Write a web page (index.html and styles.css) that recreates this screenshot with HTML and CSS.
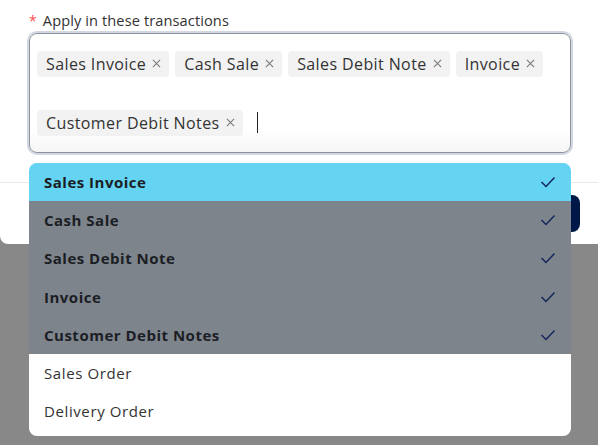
FILE: index.html
```html
<!DOCTYPE html>
<html>
<head>
<meta charset="utf-8">
<link rel="stylesheet" href="styles.css">
</head>
<body>
<div class="modal">
  <div class="field">
    <div class="label"><span class="req">*</span>Apply in these transactions</div>
    <div class="select">
      <span class="tag">Sales Invoice<svg class="x" viewBox="0 0 10 10"><path d="M1 1 L9 9 M9 1 L1 9" stroke="currentColor" stroke-width="1.2"/></svg></span>
      <span class="tag">Cash Sale<svg class="x" viewBox="0 0 10 10"><path d="M1 1 L9 9 M9 1 L1 9" stroke="currentColor" stroke-width="1.2"/></svg></span>
      <span class="tag">Sales Debit Note<svg class="x" viewBox="0 0 10 10"><path d="M1 1 L9 9 M9 1 L1 9" stroke="currentColor" stroke-width="1.2"/></svg></span>
      <span class="tag">Invoice<svg class="x" viewBox="0 0 10 10"><path d="M1 1 L9 9 M9 1 L1 9" stroke="currentColor" stroke-width="1.2"/></svg></span>
      <span class="tag">Customer Debit Notes<svg class="x" viewBox="0 0 10 10"><path d="M1 1 L9 9 M9 1 L1 9" stroke="currentColor" stroke-width="1.2"/></svg></span>
      <span class="caret"></span>
    </div>
  </div>
  <div class="divider"></div>
  <div class="footer"><span class="btn"></span></div>
</div>
<ul class="dropdown">
  <li class="opt active sel">Sales Invoice<svg class="chk" viewBox="0 0 16 12"><path d="M1.5 6 L6 10.5 L14.5 1.5" fill="none" stroke="currentColor" stroke-width="1.5"/></svg></li>
  <li class="opt sel">Cash Sale<svg class="chk" viewBox="0 0 16 12"><path d="M1.5 6 L6 10.5 L14.5 1.5" fill="none" stroke="currentColor" stroke-width="1.5"/></svg></li>
  <li class="opt sel">Sales Debit Note<svg class="chk" viewBox="0 0 16 12"><path d="M1.5 6 L6 10.5 L14.5 1.5" fill="none" stroke="currentColor" stroke-width="1.5"/></svg></li>
  <li class="opt sel">Invoice<svg class="chk" viewBox="0 0 16 12"><path d="M1.5 6 L6 10.5 L14.5 1.5" fill="none" stroke="currentColor" stroke-width="1.5"/></svg></li>
  <li class="opt sel">Customer Debit Notes<svg class="chk" viewBox="0 0 16 12"><path d="M1.5 6 L6 10.5 L14.5 1.5" fill="none" stroke="currentColor" stroke-width="1.5"/></svg></li>
  <li class="opt">Sales Order</li>
  <li class="opt">Delivery Order</li>
</ul>
</body>
</html>
```
FILE: styles.css
```css
html, body {
  margin: 0;
  padding: 0;
}
body {
  width: 598px;
  height: 445px;
  overflow: hidden;
  background: #888888;
  font-family: "Open Sans", "Noto Sans", sans-serif;
  position: relative;
}
.modal {
  width: 620px;
  height: 244px;
  background: #ffffff;
  border-bottom-left-radius: 8px;
  display: flex;
  flex-direction: column;
}
.field {
  padding: 8px 0 0 29px;
}
.label {
  font-size: 14.6px;
  color: #333333;
  height: 24px;
  line-height: 24px;
  margin-bottom: 1px;
  letter-spacing: 0.1px;
}
.req {
  color: #ff4d4f;
  margin-right: 6px;
  font-size: 14px;
}
.select {
  box-sizing: border-box;
  width: 542px;
  height: 120px;
  border: 1px solid #8d929d;
  box-shadow: 0 0 0 2px #d3d7e2;
  border-radius: 8px;
  background: linear-gradient(#ffffff 80%, #f6f6f6);
  padding: 16px 7px;
  display: flex;
  flex-wrap: wrap;
  align-items: center;
  column-gap: 6px;
  row-gap: 32px;
}
.tag {
  display: inline-flex;
  align-items: center;
  height: 26px;
  padding: 0 8px 0 9px;
  background: #f2f2f2;
  border-radius: 4px;
  font-size: 16px;
  letter-spacing: 0.4px;
  color: #333333;
}
.x {
  margin-left: 6px;
  width: 9px;
  height: 9px;
  color: #7a7a7a;
}
.caret {
  width: 1.5px;
  height: 21px;
  background: #222;
  margin-left: 8px;
}
.divider {
  margin-top: 29px;
  height: 1px;
  background: #e9e9e9;
}
.footer {
  display: flex;
  justify-content: flex-end;
  padding: 12px 40px 0 0;
}
.btn {
  width: 60px;
  height: 37px;
  background: #001847;
  border-radius: 8px;
}
.dropdown {
  position: absolute;
  left: 29px;
  top: 163px;
  width: 542px;
  margin: 0;
  padding: 0 0 5px 0;
  list-style: none;
  background: #ffffff;
  border-radius: 8px;
  overflow: hidden;
}
.opt {
  box-sizing: border-box;
  height: 38.3px;
  display: flex;
  align-items: center;
  justify-content: space-between;
  padding: 0 15px 1px 15px;
  font-size: 15px;
  letter-spacing: 0.6px;
  color: #333333;
}
.opt.sel {
  background: #7e848c;
  font-weight: 700;
  color: #1b1e24;
  letter-spacing: 0.5px;
}
.opt.active {
  background: #64d4f2;
}
.chk {
  width: 16px;
  height: 12px;
  color: #15275a;
}
```
